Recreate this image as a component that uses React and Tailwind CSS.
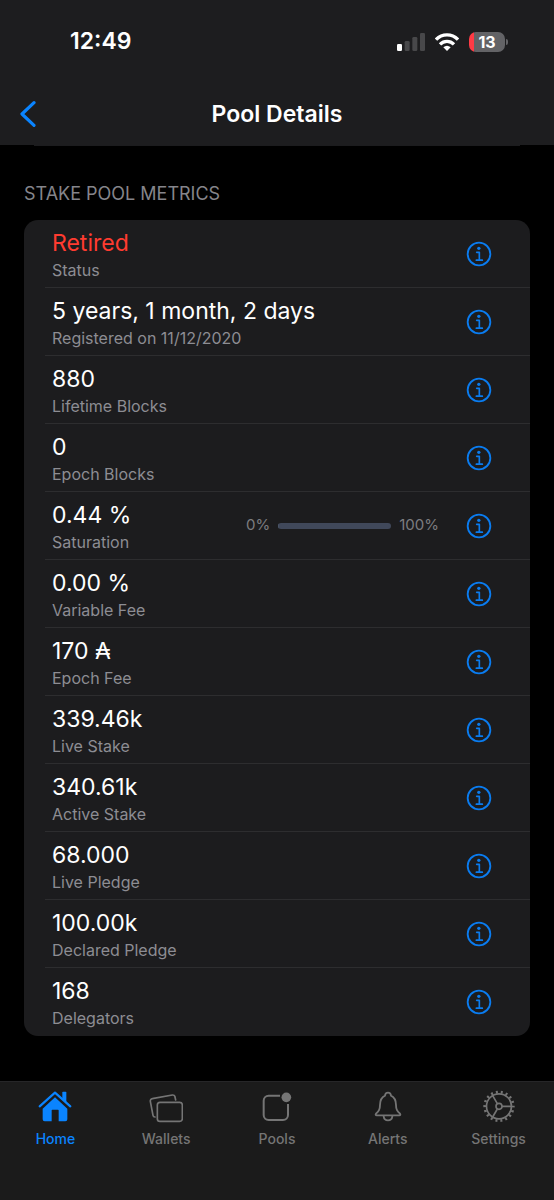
import { useState } from 'react';

const metrics = [
  { value: 'Retired', label: 'Status', danger: true },
  { value: '5 years, 1 month, 2 days', label: 'Registered on 11/12/2020' },
  { value: '880', label: 'Lifetime Blocks' },
  { value: '0', label: 'Epoch Blocks' },
  { value: '0.44 %', label: 'Saturation', meter: 0.44 },
  { value: '0.00 %', label: 'Variable Fee' },
  { value: '170 ₳', label: 'Epoch Fee' },
  { value: '339.46k', label: 'Live Stake' },
  { value: '340.61k', label: 'Active Stake' },
  { value: '68.000', label: 'Live Pledge' },
  { value: '100.00k', label: 'Declared Pledge' },
  { value: '168', label: 'Delegators' },
];

const InfoIcon = () => (
  <svg viewBox="0 0 78 78" className="size-[26px]" fill="none" stroke="currentColor" strokeWidth="5.500" aria-hidden="true">
    <circle cx="39" cy="39" r="34" />
    <circle cx="38.500" cy="22" r="5" fill="currentColor" stroke="none" />
    <path d="M32 34h8v23M31 57.500h18" strokeWidth="5" strokeLinecap="round" strokeLinejoin="round" />
  </svg>
);

const HomeIcon = () => (
  <svg viewBox="0 0 102 102" className="size-[34px]" fill="currentColor" aria-hidden="true">
    <path d="M51 25 88 59V91a6 6 0 0 1-6 6H62V64a2 2 0 0 0-2-2H43a2 2 0 0 0-2 2v33H20a6 6 0 0 1-6-6V59Z" />
    <path d="M5 52 51 11l46 41" fill="none" stroke="currentColor" strokeWidth="6.500" strokeLinecap="round" strokeLinejoin="round" />
    <path d="M73 10.500a2 2 0 0 1 2-2h8a2 2 0 0 1 2 2V40L73 30Z" />
  </svg>
);

const WalletsIcon = () => (
  <svg viewBox="0 0 102 102" className="size-[34px]" fill="none" stroke="currentColor" strokeWidth="5" strokeLinecap="round" aria-hidden="true">
    <rect x="25" y="40" width="75" height="57" rx="8" />
    <path d="M18 84a6 6 0 0 1-6-5L4 37a7 7 0 0 1 6-8l60-11a7 7 0 0 1 8 6l2 9" />
  </svg>
);

const PoolsIcon = () => (
  <svg viewBox="0 0 102 102" className="size-[34px]" fill="none" stroke="currentColor" strokeWidth="6" aria-hidden="true">
    <path d="M60 20.500H26A15 15 0 0 0 11 35.500V78a15 15 0 0 0 15 15h43a15 15 0 0 0 15-15V45" />
    <circle cx="79" cy="25" r="14.500" fill="currentColor" stroke="none" />
  </svg>
);

const AlertsIcon = () => (
  <svg viewBox="0 0 102 102" className="size-[34px]" fill="none" stroke="currentColor" strokeWidth="5.500" strokeLinecap="round" strokeLinejoin="round" aria-hidden="true">
    <path d="M42 20C43 8 59 8 60 20 72 26 75 35 75 48 75 62 79 66 87 74 89 77 88 79 85 79H17C14 79 13 77 15 74 23 66 27 62 27 48 27 35 30 26 42 20Z" />
    <path d="M38 82c2 16 24 16 26 0" />
  </svg>
);

const SettingsIcon = () => (
  <svg viewBox="0 0 102 102" className="size-[34px]" fill="none" stroke="currentColor" strokeWidth="5" aria-hidden="true">
    <circle cx="51" cy="52" r="37.500" />
    <circle cx="51" cy="52" r="43" strokeWidth="8" pathLength="72" strokeDasharray="1.600 2.400" strokeDashoffset="0.800" />
    <circle cx="51" cy="52" r="9" />
    <path d="M60 52h28M46 44 32 20M46 60 32 84" />
  </svg>
);

const tabs = [
  { name: 'Home', icon: <HomeIcon /> },
  { name: 'Wallets', icon: <WalletsIcon /> },
  { name: 'Pools', icon: <PoolsIcon /> },
  { name: 'Alerts', icon: <AlertsIcon /> },
  { name: 'Settings', icon: <SettingsIcon /> },
];

const StatusBar = () => (
  <div className="flex h-[83px] items-center justify-between pl-[70px] pr-[46px] text-white">
    <span className="text-[23px] font-semibold">12:49</span>
    <div className="flex items-center">
      <svg viewBox="0 0 84 54" className="h-[18px] w-[28px]" fill="#48484a" aria-hidden="true">
        <rect x="0" y="33" width="15" height="21" rx="4" fill="#fff" />
        <rect x="23" y="24" width="15" height="30" rx="4" />
        <rect x="46" y="12" width="15" height="42" rx="4" />
        <rect x="69" y="0" width="15" height="54" rx="4" />
      </svg>
      <svg viewBox="0 0 72 54" className="ml-[10px] h-[18px] w-[24px]" fill="none" stroke="#fff" strokeWidth="10" aria-hidden="true">
        <path d="M3 20C21 1 51 1 69 20" />
        <path d="M15 34c12-12 30-12 42 0" />
        <path d="M36 54 25 43c7-6 15-6 22 0Z" fill="#fff" stroke="none" />
      </svg>
      <div className="ml-[10px] flex items-center">
        <span className="flex h-5 w-9 items-center justify-center rounded-[7px] bg-linear-to-r from-[#ff3b45] from-14% to-[#636366] to-14% text-[16px] font-bold">
          13
        </span>
        <span className="ml-px h-[6px] w-[2px] rounded-r-full bg-[#636366]" />
      </div>
    </div>
  </div>
);

const Meter = ({ value }) => (
  <div className="mr-[27px] flex items-center gap-2 text-[15px] text-[#7c7c80]">
    <span>0%</span>
    <div
      role="meter"
      aria-label="Saturation"
      aria-valuemin={0}
      aria-valuemax={100}
      aria-valuenow={value}
      className="h-[6px] w-[113px] overflow-hidden rounded-full bg-[#40485a]"
    >
      <div className="h-full bg-[#4a5468]" style={{ width: `${value}%` }} />
    </div>
    <span>100%</span>
  </div>
);

const MetricRow = ({ metric }) => (
  <li className="group flex pl-[21px]">
    <div className="flex flex-1 items-center border-b border-[#2d2d2f] pl-[7px] pr-[38px] group-last:border-transparent">
      <div className="flex-1 pt-2 pb-[5px]">
        <p className={`text-[23px] leading-[30px] ${metric.danger ? 'text-[#ff3b30]' : 'text-white'}`}>{metric.value}</p>
        <p className="text-[16px] leading-6 text-[#8d8d93]">{metric.label}</p>
      </div>
      {metric.meter !== undefined && <Meter value={metric.meter} />}
      <button type="button" aria-label={`About ${metric.label}`} className="text-[#0a7cf0]">
        <InfoIcon />
      </button>
    </div>
  </li>
);

const App = () => {
  const [active, setActive] = useState('Home');

  return (
    <div className="flex min-h-screen flex-col bg-black font-['Inter','Noto_Sans',sans-serif]">
      <header className="bg-[#1d1d1f]">
        <StatusBar />
        <div className="grid h-[62px] grid-cols-[1fr_auto_1fr] items-center px-5">
          <button type="button" aria-label="Back" className="justify-self-start text-[#0a84ff]">
            <svg viewBox="0 0 16 26" className="h-[26px] w-4" fill="none" stroke="currentColor" strokeWidth="3.200" strokeLinecap="round" strokeLinejoin="round" aria-hidden="true">
              <path d="M14 1.700 2 13l12 11.300" />
            </svg>
          </button>
          <h1 className="text-[23px] font-semibold text-white">Pool Details</h1>
        </div>
      </header>

      <main className="flex-1 px-6 pb-11">
        <div className="mx-[10px] h-px bg-[#1c1c1e]" />
        <h2 className="mt-[34px] mb-3 text-[18px] leading-7 text-[#85858b]">STAKE POOL METRICS</h2>
        <ul className="rounded-[14px] bg-[#1c1c1e]">
          {metrics.map((metric) => (
            <MetricRow key={metric.label} metric={metric} />
          ))}
        </ul>
      </main>

      <nav className="flex border-t border-[#262628] bg-[#1b1b1b] pt-[7px] pb-[49px]">
        {tabs.map((tab) => (
          <button
            key={tab.name}
            type="button"
            onClick={() => setActive(tab.name)}
            className={`flex flex-1 basis-0 flex-col items-center gap-1 text-[14px] leading-6 font-medium ${
              active === tab.name ? 'text-[#0a84ff]' : 'text-[#757575]'
            }`}
          >
            {tab.icon}
            {tab.name}
          </button>
        ))}
      </nav>
    </div>
  );
};

export default App;
